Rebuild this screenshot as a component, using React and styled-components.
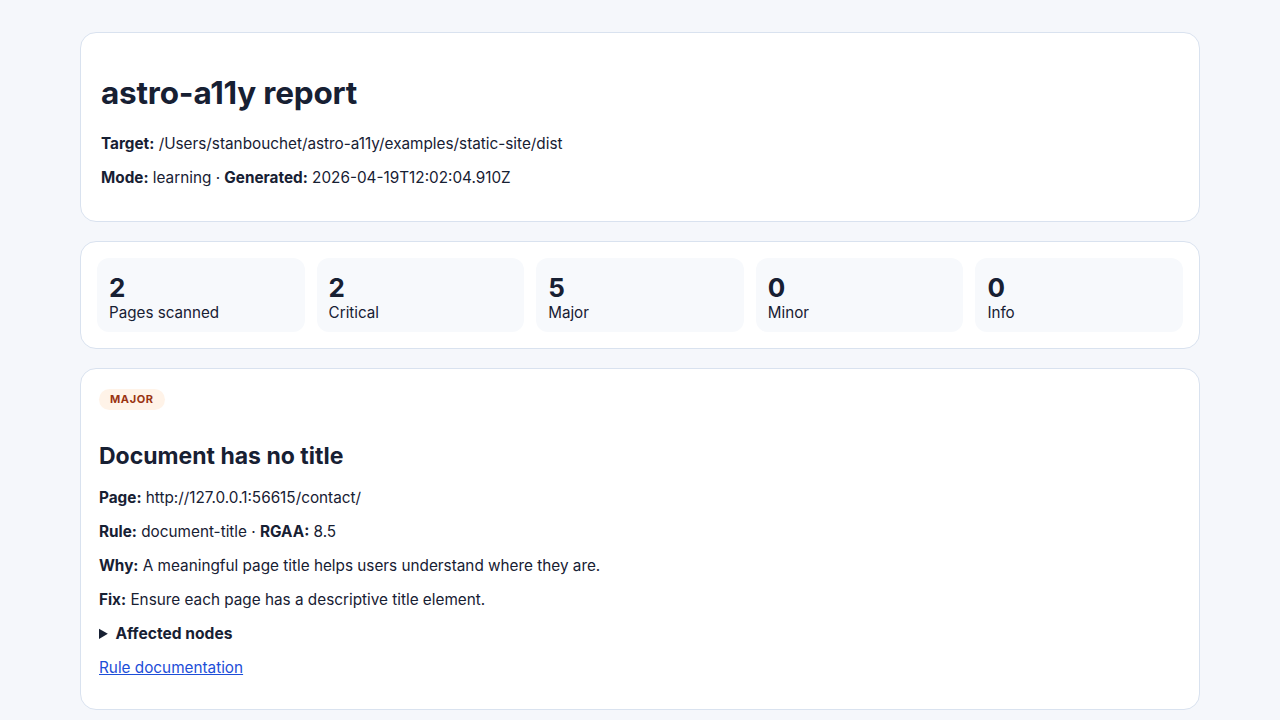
import React from "react";
import styled, { createGlobalStyle } from "styled-components";

const GlobalStyle = createGlobalStyle`
  body {
    margin: 0;
    background: #f5f7fb;
    color: #172033;
    font-family: Inter, "Noto Sans", "Liberation Sans", sans-serif;
    font-size: 15.3px;
  }
`;

const Page = styled.main`
  max-width: 1120px;
  margin: 0 auto;
  padding: 32px 0;
  display: flex;
  flex-direction: column;
  gap: 19px;
`;

const Card = styled.section`
  background: #fff;
  border: 1px solid #d9e2ef;
  border-radius: 16px;
  padding: ${p => p.$pad || "20px"};
`;

const Title = styled.h1`
  font-size: 31.5px;
  line-height: 38px;
  margin: 21px 0;
  font-weight: 700;
  letter-spacing: -0.2px;
`;

const Line = styled.p`
  margin: 12px 0;
  line-height: 22px;
`;

const Stats = styled.div`
  display: grid;
  grid-template-columns: repeat(5, 1fr);
  gap: 12px;
`;

const Tile = styled.div`
  background: #f7f9fc;
  border-radius: 12px;
  padding: 15px 12px 9px;
  display: flex;
  flex-direction: column;
`;

const Count = styled.strong`
  font-size: 26px;
  line-height: 30px;
  font-weight: 700;
`;

const Label = styled.span`
  font-size: 15.2px;
  line-height: 20px;
`;

const BadgeRow = styled.div`
  margin-bottom: 33px;
  line-height: 21px;
`;

const Badge = styled.span`
  display: inline-block;
  padding: 0 11px;
  border-radius: 999px;
  background: ${p => (p.$tone === "major" ? "#fff3e8" : "#fde8e8")};
  color: ${p => (p.$tone === "major" ? "#9a3412" : "#991b1b")};
  font-size: 11px;
  font-weight: 700;
  letter-spacing: 0.6px;
  text-transform: uppercase;
  line-height: 21px;
`;

const IssueTitle = styled.h2`
  font-size: 23px;
  line-height: 27px;
  margin: 18px 0 17px;
  font-weight: 700;
`;

const Nodes = styled.details`
  margin: 12px 0;
  line-height: 22px;
  summary {
    font-size: 15.6px;
    font-weight: 700;
    cursor: pointer;
  }
`;

const DocLink = styled.a`
  color: #1d4ed8;
  text-decoration: underline;
`;

const stats = [
  { value: 2, label: "Pages scanned" },
  { value: 2, label: "Critical" },
  { value: 5, label: "Major" },
  { value: 0, label: "Minor" },
  { value: 0, label: "Info" }
];

export default function App() {
  return (
    <>
      <GlobalStyle />
      <Page>
        <Card>
          <Title>astro-a11y report</Title>
          <Line>
            <strong>Target:</strong> /Users/stanbouchet/astro-a11y/examples/static-site/dist
          </Line>
          <Line>
            <strong>Mode:</strong> learning · <strong>Generated:</strong> 2026-04-19T12:02:04.910Z
          </Line>
        </Card>

        <Card $pad="16px">
          <Stats>
            {stats.map(s => (
              <Tile key={s.label}>
                <Count>{s.value}</Count>
                <Label>{s.label}</Label>
              </Tile>
            ))}
          </Stats>
        </Card>

        <Card $pad="18px">
          <BadgeRow>
            <Badge $tone="major">Major</Badge>
          </BadgeRow>
          <IssueTitle>Document has no title</IssueTitle>
          <Line>
            <strong>Page:</strong> http://127.0.0.1:56615/contact/
          </Line>
          <Line>
            <strong>Rule:</strong> document-title · <strong>RGAA:</strong> 8.5
          </Line>
          <Line>
            <strong>Why:</strong> A meaningful page title helps users understand where they are.
          </Line>
          <Line>
            <strong>Fix:</strong> Ensure each page has a descriptive title element.
          </Line>
          <Nodes>
            <summary>Affected nodes</summary>
          </Nodes>
          <Line>
            <DocLink href="#">Rule documentation</DocLink>
          </Line>
        </Card>
      </Page>
    </>
  );
}
